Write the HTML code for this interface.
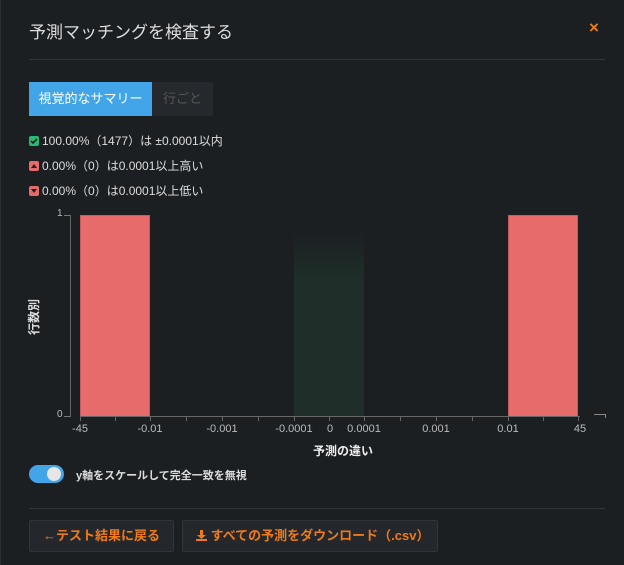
<!DOCTYPE html>
<html><head><meta charset="utf-8"><style>
*{margin:0;padding:0;box-sizing:border-box}
body{width:624px;height:565px;background:#1b1f22;font-family:"Liberation Sans","Noto Sans CJK JP",sans-serif;color:#e0e0e0;position:relative;overflow:hidden;box-shadow:inset 1px 0 0 #2a2f33}
.a{position:absolute}
.t{font-size:12px;color:#ddd;white-space:nowrap}
.tick{position:absolute;top:417px;width:1px;height:4px;background:#666}
.lbl{position:absolute;top:423px;font-size:11px;color:#bbb;transform:translateX(-50%);white-space:nowrap}
.ic{display:inline-block;width:10px;height:10px;border-radius:2px;vertical-align:-1px;margin-right:3px;position:relative}
.btn{position:absolute;top:520px;height:32px;background:#24282c;border:1px solid #2f3438;border-radius:2px;color:#f07a1a;font-size:13px;font-weight:bold;line-height:30px;padding-left:13px}
</style></head><body>
<div class="a" style="left:29px;top:18px;font-size:17px;color:#ddd">予測マッチングを検査する</div>
<div class="a" style="left:589px;top:18px;font-size:17px;color:#f07a1a;font-weight:bold">×</div>
<div class="a" style="left:29px;top:59px;width:576px;height:1px;background:#30353a"></div>
<div class="a" style="left:29px;top:82px;width:123px;height:34px;background:#42a5e8;color:#fff;font-size:13px;line-height:34px;text-align:center">視覚的なサマリー</div>
<div class="a" style="left:152px;top:82px;width:61px;height:34px;background:#25292d;color:#555;font-size:13px;line-height:34px;text-align:center;border-radius:0 2px 2px 0">行ごと</div>
<div class="a t" style="left:29px;top:132px"><span class="ic" style="background:#2bb673"><svg width="10" height="10" style="position:absolute;left:0;top:0"><path d="M2 5l2 2 4-4" stroke="#111" stroke-width="1.5" fill="none"/></svg></span>100.00%（1477）は ±0.0001以内</div>
<div class="a t" style="left:29px;top:157px"><span class="ic" style="background:#e86b6b"><svg width="10" height="10" style="position:absolute;left:0;top:0"><path d="M2 7L5 3 8 7z" fill="#222"/></svg></span>0.00%（0）は0.0001以上高い</div>
<div class="a t" style="left:29px;top:182px"><span class="ic" style="background:#e86b6b"><svg width="10" height="10" style="position:absolute;left:0;top:0"><path d="M2 3L5 7 8 3z" fill="#222"/></svg></span>0.00%（0）は0.0001以上低い</div>
<div class="a" style="left:57px;top:208px;font-size:10px;color:#bbb">1</div>
<div class="a" style="left:57px;top:409px;font-size:10px;color:#bbb">0</div>
<div class="a" style="left:64px;top:215px;width:6px;height:1px;background:#777"></div>
<div class="a" style="left:64px;top:416px;width:6px;height:1px;background:#777"></div>
<div class="a" style="left:70px;top:215px;width:1px;height:202px;background:#666"></div>
<div class="a" style="left:25px;font-size:12px;font-weight:bold;color:#ddd;transform:rotate(-90deg);transform-origin:left top;top:335px">行数別</div>
<div class="a" style="left:80px;top:215px;width:70px;height:202px;background:#e86b6b;border:1px solid #c95a5a"></div>
<div class="a" style="left:508px;top:215px;width:70px;height:202px;background:#e86b6b;border:1px solid #c95a5a"></div>
<div class="a" style="left:294px;top:232px;width:70px;height:185px;background:linear-gradient(#1b1f22,#1f2e28 25%,#1f2e28)"></div>
<div class="a" style="left:80px;top:416px;width:500px;height:1px;background:#666"></div>
<div class="a" style="left:594px;top:414px;width:11px;height:1px;background:#888"></div>
<div class="a" style="left:605px;top:414px;width:1px;height:4px;background:#888"></div>
<div class="tick" style="left:80px"></div><div class="tick" style="left:115px"></div><div class="tick" style="left:150px"></div><div class="tick" style="left:186px"></div><div class="tick" style="left:222px"></div><div class="tick" style="left:258px"></div><div class="tick" style="left:294px"></div><div class="tick" style="left:329px"></div><div class="tick" style="left:364px"></div><div class="tick" style="left:400px"></div><div class="tick" style="left:436px"></div><div class="tick" style="left:472px"></div><div class="tick" style="left:508px"></div><div class="tick" style="left:543px"></div><div class="tick" style="left:578px"></div>
<div class="lbl" style="left:80px">-45</div><div class="lbl" style="left:150px">-0.01</div><div class="lbl" style="left:222px">-0.001</div><div class="lbl" style="left:294px">-0.0001</div><div class="lbl" style="left:330px">0</div><div class="lbl" style="left:364px">0.0001</div><div class="lbl" style="left:436px">0.001</div><div class="lbl" style="left:508px">0.01</div><div class="lbl" style="left:580px">45</div>
<div class="a" style="left:313px;top:442px;font-size:12px;font-weight:bold;color:#eee">予測の違い</div>
<div class="a" style="left:29px;top:465px;width:35px;height:18px;border-radius:9px;background:#42a5e8"></div>
<div class="a" style="left:47px;top:467px;width:14px;height:14px;border-radius:7px;background:#e6e6e6"></div>
<div class="a" style="left:76px;top:467px;font-size:11px;font-weight:bold;color:#ddd">y軸をスケールして完全一致を無視</div>
<div class="a" style="left:29px;top:508px;width:576px;height:1px;background:#30353a"></div>
<div class="btn" style="left:29px;width:145px">←テスト結果に戻る</div>
<div class="btn" style="left:182px;width:256px"><svg width="11" height="11" style="vertical-align:-1px"><path d="M4 0h3v5h3L5.5 9 1 5h3z M0 9h11v2H0z" fill="#f07a1a"/></svg> すべての予測をダウンロード（.csv）</div>
</body></html>
